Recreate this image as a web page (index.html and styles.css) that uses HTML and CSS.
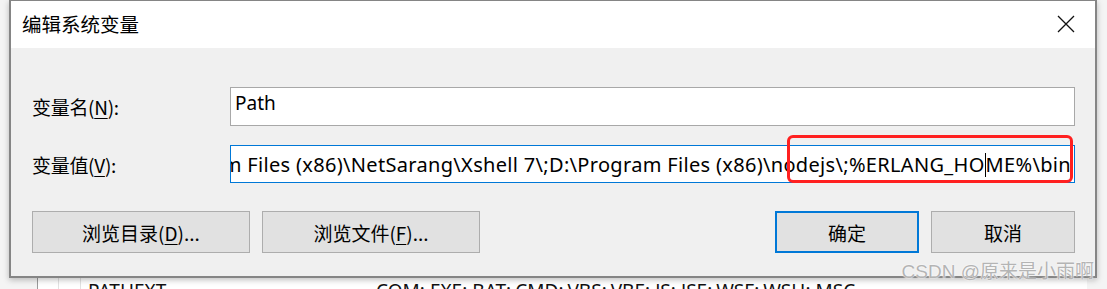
FILE: index.html
```html
<!DOCTYPE html>
<html lang="zh-CN">
<head>
    <meta charset="UTF-8">
    <meta name="viewport" content="width=device-width, initial-scale=1.0">
    <title>编辑系统变量</title>
    <link rel="stylesheet" href="styles.css">
</head>
<body>
    <div class="dialog">
        <div class="titlebar">
            <span class="title">编辑系统变量</span>
            <svg class="close" width="18" height="18" viewBox="0 0 18 18">
                <path d="M1 1 L17 17 M17 1 L1 17" stroke="#111" stroke-width="1.3" fill="none"/>
            </svg>
        </div>
        <div class="content">
            <div class="row">
                <label class="label">变量名(<u>N</u>):</label>
                <div class="field">Path</div>
            </div>
            <div class="row">
                <label class="label">变量值(<u>V</u>):</label>
                <div class="field active">
                    <span class="value">D:\Program Files (x86)\NetSarang\Xshell 7\;D:\Program Files (x86)\nodejs\;%ERLANG_HO<span class="caret"></span>ME%\bin</span>
                </div>
            </div>
            <div class="buttons">
                <button class="btn wide">浏览目录(<u>D</u>)...</button>
                <button class="btn wide">浏览文件(<u>F</u>)...</button>
                <span class="spacer"></span>
                <button class="btn primary">确定</button>
                <button class="btn">取消</button>
            </div>
        </div>
    </div>
    <div class="behind">
        <span class="col c1"></span>
        <span class="col c2"></span>
        <span class="name">PATHEXT</span>
        <span class="val">COM;.EXE;.BAT;.CMD;.VBS;.VBE;.JS;.JSE;.WSF;.WSH;.MSC</span>
    </div>

    <!-- annotation + watermark drawn over the screenshot -->
    <div class="highlight"></div>
    <div class="watermark">CSDN @原来是小雨啊</div>
</body>
</html>
```

FILE: styles.css
```css
body {
    margin: 0;
    width: 1107px;
    height: 289px;
    overflow: hidden;
    position: relative;
    background-color: #f4f4f4;
    font-family: "Noto Sans", "Noto Sans CJK SC", sans-serif;
    color: #000;
}
.dialog {
    margin-left: 9px;
    width: 1088px;
    height: 278px;
    box-sizing: border-box;
    border: 2px solid #858585;
    border-top-width: 1px;
    background-color: #f0f0f0;
    box-shadow: 0 2px 6px rgba(0,0,0,0.25);
    position: relative;
    z-index: 1;
}
.titlebar {
    height: 47px;
    background-color: #fff;
    display: flex;
    align-items: center;
    justify-content: space-between;
    padding: 0 20px 0 11px;
}
.title {
    font-family: "Noto Sans CJK SC", sans-serif;
    font-size: 19.5px;
    margin-top: -2px;
}
.close {
    margin-top: -1px;
}
.content {
    padding: 39px 20px 0 21px;
}
.row {
    display: flex;
    align-items: center;
    margin-bottom: 19px;
}
.label {
    width: 198px;
    font-family: "Noto Sans CJK SC", sans-serif;
    font-size: 19px;
    letter-spacing: -0.3px;
}
u {
    text-underline-offset: 3px;
}
.field {
    flex: 1;
    height: 39px;
    box-sizing: border-box;
    border: 1px solid #a8a8a8;
    background-color: #fff;
    font-size: 19px;
    padding: 0 4px;
    line-height: 30px;
    overflow: hidden;
    white-space: nowrap;
}
.field.active {
    height: 38px;
    border-color: #0078d7;
    display: flex;
    justify-content: flex-end;
    padding-right: 3px;
    line-height: 38px;
    font-size: 20px;
    letter-spacing: 0.32px;
}
.caret {
    display: inline-block;
    width: 0;
    height: 24px;
    border-left: 1px solid #000;
    vertical-align: -5px;
}
.buttons {
    display: flex;
    gap: 12px;
    margin-top: 28px;
}
.spacer {
    flex: 1;
}
.btn {
    width: 144px;
    height: 42px;
    background-color: #e1e1e1;
    border: 1px solid #adadad;
    font-family: "Noto Sans CJK SC", sans-serif;
    font-size: 19px;
    color: #000;
    padding: 0;
}
.btn.wide {
    width: 218px;
}
.btn.primary {
    border: 2px solid #0078d7;
}
.behind {
    position: relative;
    height: 11px;
    overflow: hidden;
    background-color: #fff;
    margin-left: 37px;
    margin-right: 20px;
    border-left: 1px solid #9a9a9a;
}
.col {
    position: absolute;
    top: 0;
    bottom: 0;
    border-left: 1px solid #e2e2e2;
}
.c1 { left: 20px; }
.c2 { left: 42px; }
.name, .val {
    position: absolute;
    top: 4px;
    font-size: 19px;
    line-height: 19px;
    color: #111;
}
.name { left: 50px; }
.val { left: 338px; }
.highlight {
    position: absolute;
    left: 787px;
    top: 135px;
    width: 280px;
    height: 42px;
    border: 3px solid #ff2020;
    border-radius: 6px;
    z-index: 2;
}
.watermark {
    position: absolute;
    right: 13px;
    top: 256px;
    font-family: "Liberation Sans", "Noto Sans CJK SC", sans-serif;
    font-size: 19px;
    color: #b4b4b4;
    text-shadow: 0 0 2px #fff, 0 0 1px #fff;
    z-index: 3;
}
```
